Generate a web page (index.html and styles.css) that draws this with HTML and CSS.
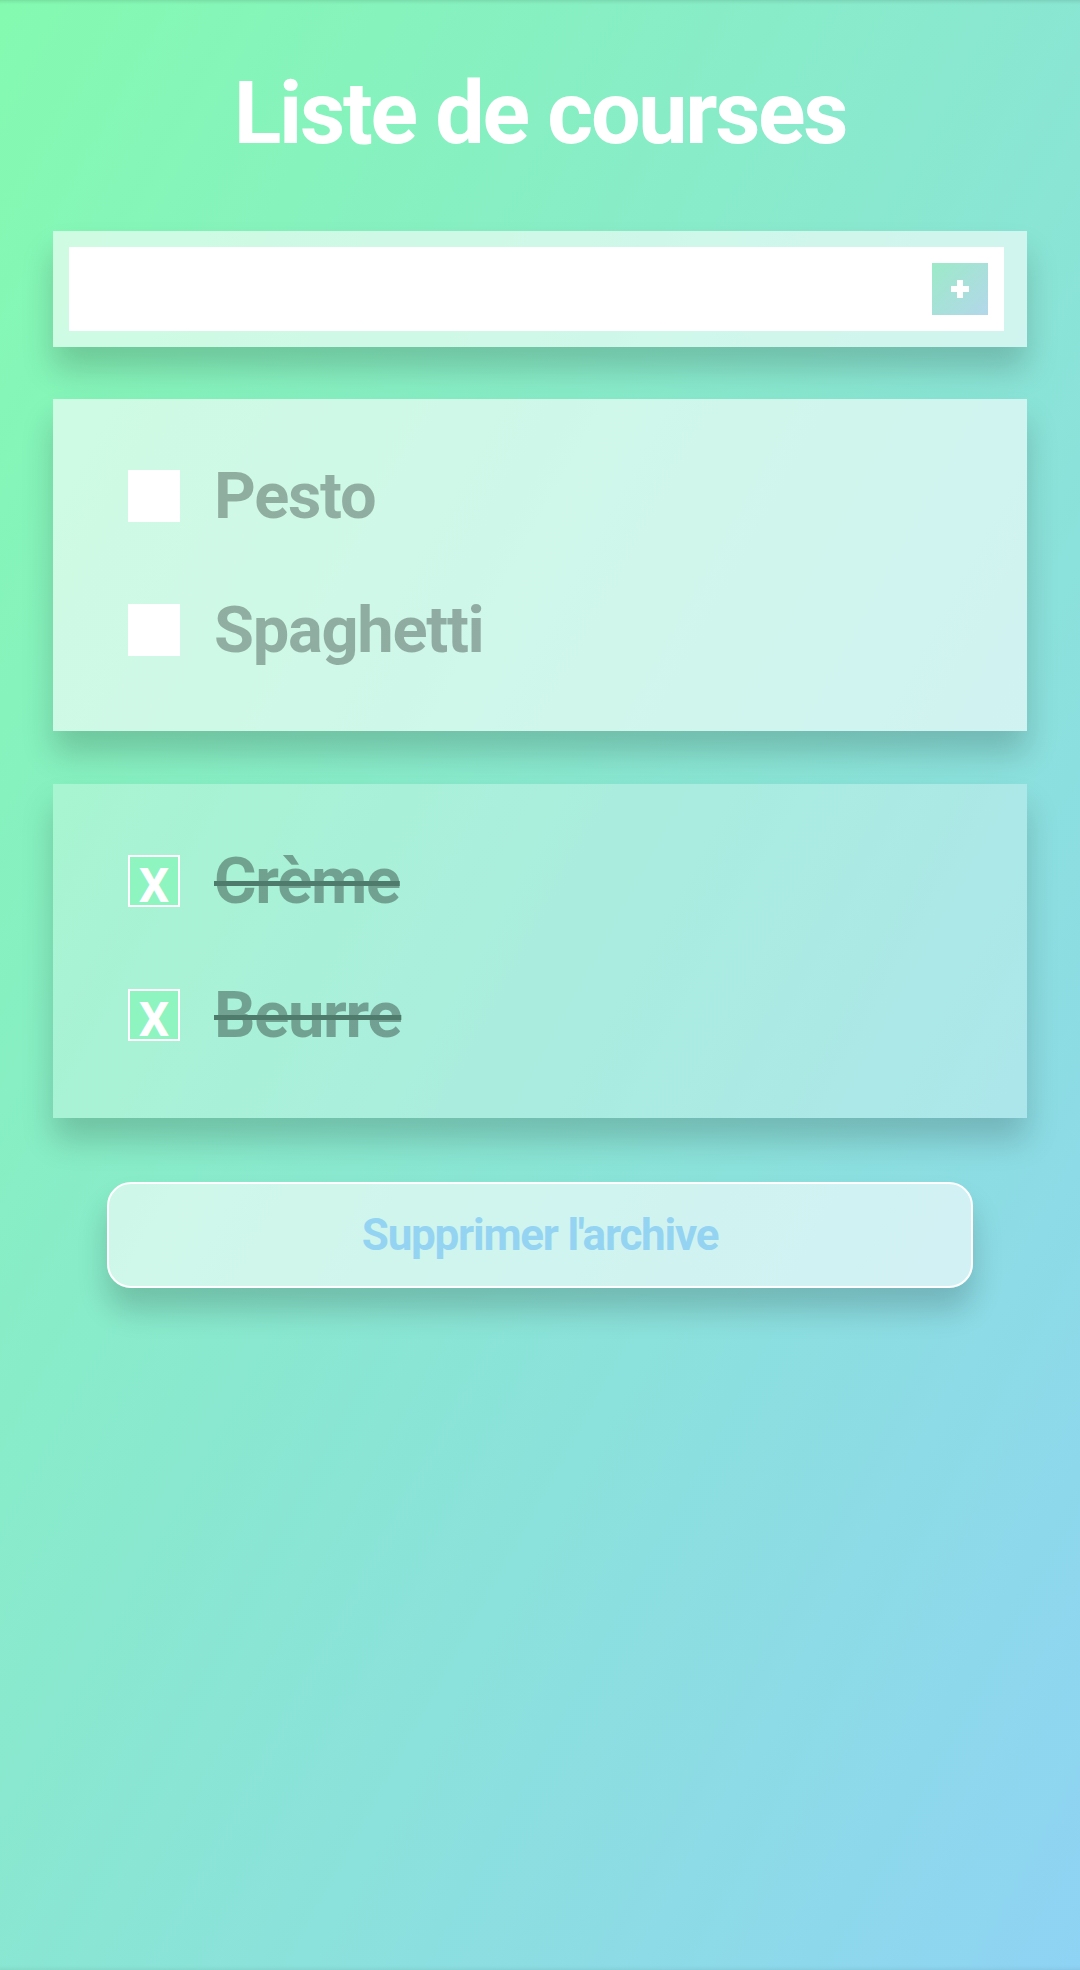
FILE: index.html
```html
<!DOCTYPE html>
<html lang="fr">
<head>
<meta charset="utf-8">
<title>Liste de courses</title>
<link rel="stylesheet" href="styles.css">
</head>
<body>
<main class="app">
  <h1 class="title">Liste de courses</h1>

  <form class="card add-card">
    <div class="add-field">
      <input class="add-input" type="text" aria-label="Nouvel article">
      <button class="add-btn" type="button" aria-label="Ajouter">
        <svg width="18" height="18" viewBox="0 0 18 18"><rect x="6" y="0" width="6" height="18" fill="#fff"/><rect x="0" y="6" width="18" height="6" fill="#fff"/></svg>
      </button>
    </div>
  </form>

  <ul class="card list">
    <li class="item"><span class="box"></span><span class="label">Pesto</span></li>
    <li class="item"><span class="box"></span><span class="label">Spaghetti</span></li>
  </ul>

  <ul class="card list list-done">
    <li class="item"><span class="box box-checked">X</span><span class="label">Crème</span></li>
    <li class="item"><span class="box box-checked">X</span><span class="label">Beurre</span></li>
  </ul>

  <button class="clear-btn" type="button">Supprimer l'archive</button>
</main>
</body>
</html>
```

FILE: styles.css
```css
html {
  min-height: 100%;
  background: linear-gradient(to bottom right, #84fab0, #8fd3f4);
}

body {
  margin: 0;
  min-height: 1970px;
  font-family: Roboto, "Liberation Sans", Arial, sans-serif;
  box-shadow: inset 0 5px 4px -4px rgba(0, 0, 0, 0.14), inset 0 -5px 4px -4px rgba(0, 0, 0, 0.08);
}

.app {
  padding: 61px 53px 0 53px;
  display: flex;
  flex-direction: column;
}

.title {
  margin: 0;
  text-align: center;
  color: #fff;
  font-size: 88px;
  font-weight: 700;
  letter-spacing: -0.026em;
  line-height: normal;
}

.card {
  background: rgba(255, 255, 255, 0.6);
  box-shadow: 0 22px 30px rgba(0, 0, 0, 0.18);
}

.add-card {
  margin: 67px 0 0;
  padding: 16px 23px 16px 16px;
}

.add-field {
  background: #fff;
  height: 84px;
  box-sizing: border-box;
  padding: 16px;
  display: flex;
  align-items: center;
}

.add-input {
  flex: 1;
  border: none;
  outline: none;
  background: transparent;
  font: inherit;
  font-size: 32px;
}

.add-btn {
  width: 56px;
  height: 52px;
  border: none;
  padding: 0;
  background: linear-gradient(135deg, #9ceac8, #b3d7ea);
  display: flex;
  align-items: center;
  justify-content: center;
}

.list {
  list-style: none;
  margin: 52px 0 0;
  padding: 71px 0 75px 75px;
  display: flex;
  flex-direction: column;
  gap: 82px;
}

.list-done {
  margin-top: 53px;
  padding-bottom: 77px;
  background: rgba(255, 255, 255, 0.28);
}

.item {
  display: flex;
  align-items: center;
  height: 52px;
}

.box {
  width: 52px;
  height: 52px;
  box-sizing: border-box;
  background: #fff;
  flex: none;
}

.box-checked {
  background: #8ef5c0;
  border: 2px solid #fff;
  color: #fff;
  font-size: 48px;
  font-weight: 700;
  line-height: 57px;
  text-align: center;
  overflow: visible;
}

.label {
  margin-left: 34px;
  font-size: 65px;
  font-weight: 700;
  letter-spacing: -0.02em;
  line-height: 52px;
  color: rgba(0, 0, 0, 0.3);
}

.list-done .label {
  color: rgba(0, 0, 0, 0.33);
  text-decoration: line-through;
  text-decoration-color: #4e7b6c;
  text-decoration-thickness: 5px;
}

.clear-btn {
  margin: 64px 54px 0;
  height: 106px;
  border: 2px solid #fff;
  border-radius: 24px;
  background: rgba(255, 255, 255, 0.6);
  box-shadow: 0 22px 30px rgba(0, 0, 0, 0.18);
  color: #94d4f2;
  font-family: Roboto, "Liberation Sans", Arial, sans-serif;
  font-size: 44px;
  font-weight: 700;
  letter-spacing: -0.028em;
}
```
